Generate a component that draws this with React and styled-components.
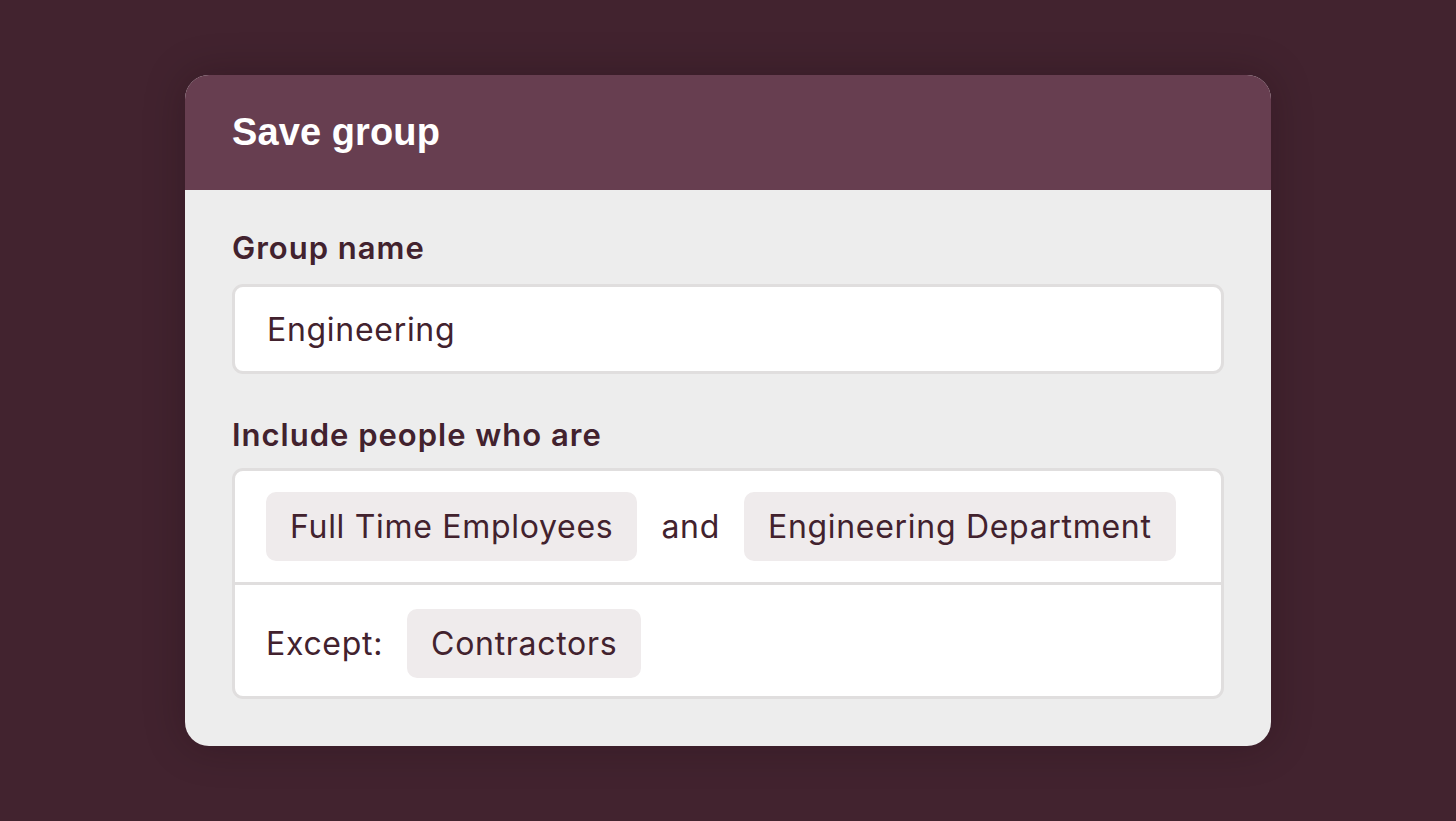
import React from 'react';
import styled, {createGlobalStyle} from 'styled-components';

const GlobalStyle = createGlobalStyle`
  html, body {
    margin: 0;
    padding: 0;
    background: #42232f;
  }
  * {
    box-sizing: border-box;
  }
`;

const Page = styled.div`
  width: 100vw;
  height: 100vh;
  display: flex;
  align-items: flex-start;
  justify-content: center;
  padding-top: 75px;
  font-family: Inter, 'Noto Sans', sans-serif;
  color: #42222e;
`;

const Card = styled.div`
  width: 1086px;
  border-radius: 24px;
  overflow: hidden;
  background: #ededed;
  box-shadow: 0 0 40px rgba(20, 5, 12, 0.25);
`;

const Header = styled.header`
  height: 115px;
  background: #673e50;
  display: flex;
  align-items: center;
  padding: 0 47px;
`;

const Title = styled.h1`
  margin: 0;
  font-family: 'Liberation Sans', Arial, sans-serif;
  font-weight: 700;
  font-size: 38px;
  color: #ffffff;
  letter-spacing: 0.1px;
`;

const Body = styled.div`
  padding: 39px 47px 47px;
  display: flex;
  flex-direction: column;
`;

const Label = styled.div`
  font-size: 31px;
  line-height: 38px;
  font-weight: 600;
  letter-spacing: 1px;
  margin-top: ${p => p.$top || 0}px;
  margin-bottom: ${p => p.$bottom || 16}px;
`;

const Input = styled.div`
  height: 90px;
  background: #ffffff;
  border: 3px solid #e0dede;
  border-radius: 11px;
  display: flex;
  align-items: center;
  padding-left: 32px;
  font-size: 32px;
  letter-spacing: 0.7px;
`;

const RuleBox = styled.div`
  background: #ffffff;
  border: 3px solid #e0dede;
  border-radius: 11px;
  display: flex;
  flex-direction: column;
`;

const Row = styled.div`
  height: ${p => p.$h}px;
  display: flex;
  align-items: center;
  gap: 24px;
  padding-left: 31px;
  padding-top: ${p => p.$shift || 0}px;
  & + & {
    border-top: 3px solid #e0dede;
  }
`;

const Chip = styled.span`
  height: 69px;
  display: inline-flex;
  align-items: center;
  padding: 0 24px;
  background: #efebec;
  border-radius: 10px;
  font-size: 32px;
  letter-spacing: 0.7px;
`;

const Word = styled.span`
  font-size: 32px;
  letter-spacing: 0.7px;
`;

const App = () => {
  return (
    <Page>
      <GlobalStyle />
      <Card>
        <Header>
          <Title>Save group</Title>
        </Header>
        <Body>
          <Label $bottom={17}>Group name</Label>
          <Input>Engineering</Input>
          <Label $top={42} $bottom={14}>
            Include people who are
          </Label>
          <RuleBox>
            <Row $h={111}>
              <Chip>Full Time Employees</Chip>
              <Word>and</Word>
              <Chip>Engineering Department</Chip>
            </Row>
            <Row $h={114} $shift={6}>
              <Word>Except:</Word>
              <Chip>Contractors</Chip>
            </Row>
          </RuleBox>
        </Body>
      </Card>
    </Page>
  );
};

export default App;
